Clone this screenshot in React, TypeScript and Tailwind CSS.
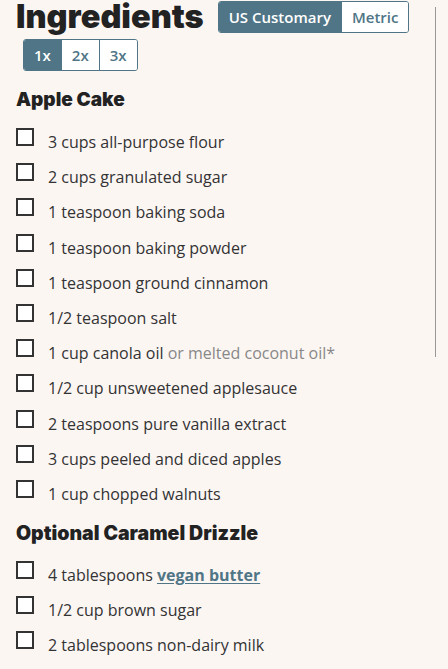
import React from 'react';

type Item = { text: string; note?: string; link?: string };

const cake: Item[] = [
  { text: '3 cups all-purpose flour' },
  { text: '2 cups granulated sugar' },
  { text: '1 teaspoon baking soda' },
  { text: '1 teaspoon baking powder' },
  { text: '1 teaspoon ground cinnamon' },
  { text: '1/2 teaspoon salt' },
  { text: '1 cup canola oil', note: 'or melted coconut oil*' },
  { text: '1/2 cup unsweetened applesauce' },
  { text: '2 teaspoons pure vanilla extract' },
  { text: '3 cups peeled and diced apples' },
  { text: '1 cup chopped walnuts' },
];

const drizzle: Item[] = [
  { text: '4 tablespoons', link: 'vegan butter' },
  { text: '1/2 cup brown sugar' },
  { text: '2 tablespoons non-dairy milk' },
];

const heading = { fontFamily: 'Inter, "Liberation Sans", sans-serif' };

function Row({ item }: { item: Item }) {
  return (
    <li className="flex items-start gap-[14px] h-[35.2px]">
      <span className="w-[18px] h-[18px] shrink-0 border-2 border-[#333] bg-white" />
      <span className="mt-[2px] leading-6 text-[16px] text-[#333] whitespace-nowrap">
        {item.text}
        {item.note && <span className="text-[#888]"> {item.note}</span>}
        {item.link && (
          <>
            {' '}
            <a className="font-bold text-[#4f7586] underline underline-offset-2">{item.link}</a>
          </>
        )}
      </span>
    </li>
  );
}

function Toggle({ options, active }: { options: string[]; active: number }) {
  return (
    <div className="flex h-[32px] rounded-[3px] border border-[#4f7586] overflow-hidden text-[15px] font-semibold">
      {options.map((o, i) => (
        <span
          key={o}
          className={
            'flex items-center justify-center px-[10px] ' +
            (i === active ? 'bg-[#4f7586] text-white ' : 'bg-white text-[#4f7586] ') +
            (i > 0 ? 'border-l border-[#4f7586]' : '')
          }
        >
          {o}
        </span>
      ))}
    </div>
  );
}

export default function App() {
  return (
    <div
      className="flex w-[448px] h-[669px] overflow-hidden bg-[#fcf6f3]"
      style={{ fontFamily: '"Open Sans", "Noto Sans", sans-serif' }}
    >
      <div className="flex-1 pl-4">
        <div className="flex items-start">
          <h2 className="text-[32.5px] leading-[33px] font-black text-[#222]" style={heading}>
            Ingredients
          </h2>
          <div className="ml-[14px] mt-[1px]">
            <Toggle options={['US Customary', 'Metric']} active={0} />
          </div>
        </div>
        <div className="ml-[7px] mt-[6px] flex">
          <Toggle options={['1x', '2x', '3x']} active={0} />
        </div>

        <h3 className="mt-[17px] mb-[16px] text-[19px] leading-6 font-black text-[#222]" style={heading}>
          Apple Cake
        </h3>
        <ul>
          {cake.map((it) => (
            <Row key={it.text} item={it} />
          ))}
        </ul>

        <h3 className="mt-[6px] mb-[16px] text-[19.5px] leading-6 font-black text-[#222]" style={heading}>
          Optional Caramel Drizzle
        </h3>
        <ul>
          {drizzle.map((it) => (
            <Row key={it.text} item={it} />
          ))}
        </ul>
      </div>
      <div className="w-px h-[350px] mt-[7px] mr-[12px] bg-[#999]" />
    </div>
  );
}
